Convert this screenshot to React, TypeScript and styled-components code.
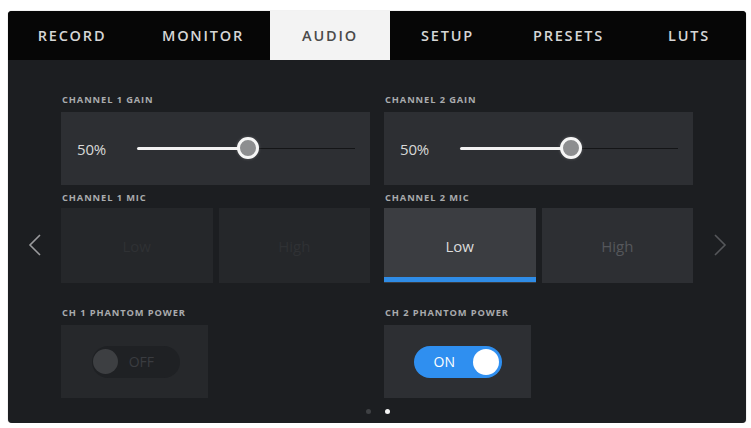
import React from "react";
import styled, { createGlobalStyle } from "styled-components";

const GlobalStyle = createGlobalStyle`
  html, body {
    margin: 0;
    padding: 0;
    background: #ffffff;
  }
  body {
    font-family: "Open Sans", "Liberation Sans", sans-serif;
  }
`;

const Screen = styled.div`
  width: 738px;
  height: 412px;
  margin: 11px 0 0 8px;
  background: #1c1e21;
  border-radius: 4px;
  overflow: hidden;
  display: flex;
  flex-direction: column;
  box-shadow: 0 0 1px rgba(0, 0, 0, 0.5);
`;

const TabBar = styled.div`
  height: 49px;
  background: #060606;
  display: grid;
  grid-template-columns: 128px 134px 120px 115px 127px 114px;
`;

const Tab = styled.div<{ $active?: boolean }>`
  display: flex;
  align-items: center;
  justify-content: center;
  font-size: 14.5px;
  font-weight: 600;
  letter-spacing: 1.8px;
  color: ${(p) => (p.$active ? "#4a4a4a" : "#d6d6d6")};
  background: ${(p) => (p.$active ? "#f3f3f3" : "transparent")};
`;

const Body = styled.div`
  flex: 1;
  display: flex;
`;

const Side = styled.div`
  width: 53px;
  display: flex;
  align-items: center;
  justify-content: center;
  padding-top: 7px;
`;

const Main = styled.div`
  flex: 1;
  display: flex;
  flex-direction: column;
  padding-top: 34px;
`;

const Columns = styled.div`
  display: grid;
  grid-template-columns: 309px 309px;
  column-gap: 14px;
`;

const Section = styled.div<{ $gap?: number }>`
  display: flex;
  flex-direction: column;
  margin-top: ${(p) => p.$gap ?? 0}px;
`;

const Label = styled.div<{ $space?: number }>`
  height: 12px;
  line-height: 12px;
  font-size: 9.3px;
  font-weight: 700;
  letter-spacing: 0.9px;
  color: #a9abad;
  margin-bottom: ${(p) => p.$space ?? 6}px;
  padding-left: 1px;
  white-space: nowrap;
`;

const Panel = styled.div<{ $dim?: boolean }>`
  height: 73px;
  background: ${(p) => (p.$dim ? "#26282b" : "#2d2f33")};
`;

const SliderPanel = styled(Panel)`
  display: flex;
  align-items: center;
  padding: 0 15px 0 16px;
`;

const Value = styled.div`
  width: 60px;
  font-size: 15px;
  color: #d8d8d8;
  letter-spacing: -0.2px;
`;

const Track = styled.div`
  position: relative;
  flex: 1;
  height: 1px;
  background: #141517;
`;

const Fill = styled.div`
  position: absolute;
  left: 0;
  top: -1px;
  height: 3px;
  background: #f2f2f2;
  border-radius: 2px;
`;

const Thumb = styled.div`
  position: absolute;
  top: -11px;
  width: 16px;
  height: 16px;
  margin-left: -9px;
  border-radius: 50%;
  background: #8d8e90;
  border: 3px solid #f6f6f6;
  box-shadow: 0 0 3px rgba(255, 255, 255, 0.25);
`;

const ButtonRow = styled.div`
  display: grid;
  grid-template-columns: 1fr 1fr;
  column-gap: 6px;
  height: 75px;
`;

const MicButton = styled.div<{ $state: "active" | "idle" | "disabled" }>`
  position: relative;
  display: flex;
  align-items: center;
  justify-content: center;
  font-size: 15px;
  background: ${(p) =>
    p.$state === "active" ? "#3b3d41" : p.$state === "idle" ? "#2d2f33" : "#25272a"};
  color: ${(p) =>
    p.$state === "active" ? "#dcdcdc" : p.$state === "idle" ? "#55575b" : "#2f3134"};
`;

const ActiveBar = styled.div`
  position: absolute;
  left: 0;
  right: 0;
  bottom: 1px;
  height: 5px;
  background: #2f8ce6;
`;

const PowerPanel = styled(Panel)`
  width: 147px;
  display: flex;
  align-items: center;
  justify-content: center;
`;

const Toggle = styled.div<{ $on?: boolean }>`
  width: 88px;
  height: 32px;
  border-radius: 16px;
  box-sizing: border-box;
  display: flex;
  align-items: center;
  flex-direction: ${(p) => (p.$on ? "row" : "row-reverse")};
  justify-content: space-between;
  padding: ${(p) => (p.$on ? "0 3px 0 20px" : "0 26px 0 1px")};
  background: ${(p) => (p.$on ? "#2f8ff0" : "#1f2124")};
  font-size: 14px;
  font-weight: 500;
  color: ${(p) => (p.$on ? "#ffffff" : "#3a3c40")};
  margin-left: ${(p) => (p.$on ? 0 : 3)}px;
`;

const Knob = styled.div<{ $on?: boolean }>`
  width: ${(p) => (p.$on ? 26 : 25)}px;
  height: ${(p) => (p.$on ? 26 : 25)}px;
  border-radius: 50%;
  background: ${(p) => (p.$on ? "#ffffff" : "#3d3f42")};
`;

const Dots = styled.div`
  display: flex;
  justify-content: center;
  gap: 14px;
  margin-top: 11px;
  padding-left: 1px;
`;

const Dot = styled.div<{ $on?: boolean }>`
  width: 5px;
  height: 5px;
  border-radius: 50%;
  background: ${(p) => (p.$on ? "#f4f4f4" : "#3f4144")};
`;

const Chevron = ({ dir, color }: { dir: "left" | "right"; color: string }) => (
  <svg width="14" height="24" viewBox="0 0 14 24">
    <polyline
      points={dir === "left" ? "12,2 2,12 12,22" : "2,2 12,12 2,22"}
      fill="none"
      stroke={color}
      strokeWidth="1.6"
    />
  </svg>
);

const tabs = ["RECORD", "MONITOR", "AUDIO", "SETUP", "PRESETS", "LUTS"];

const GainSlider = ({ value }: { value: number }) => (
  <SliderPanel>
    <Value>{value}%</Value>
    <Track>
      <Fill style={{ width: `${value}%` }} />
      <Thumb style={{ left: `${value}%` }} />
    </Track>
  </SliderPanel>
);

const App: React.FC = () => {
  return (
    <>
      <GlobalStyle />
      <Screen>
        <TabBar>
          {tabs.map((t) => (
            <Tab key={t} $active={t === "AUDIO"}>
              {t}
            </Tab>
          ))}
        </TabBar>
        <Body>
          <Side>
            <Chevron dir="left" color="#9a9b9d" />
          </Side>
          <Main>
            <Columns>
              <Section>
                <Label>CHANNEL 1 GAIN</Label>
                <GainSlider value={50} />
              </Section>
              <Section>
                <Label>CHANNEL 2 GAIN</Label>
                <GainSlider value={50} />
              </Section>
              <Section $gap={7}>
                <Label $space={4}>CHANNEL 1 MIC</Label>
                <ButtonRow>
                  <MicButton $state="disabled">Low</MicButton>
                  <MicButton $state="disabled">High</MicButton>
                </ButtonRow>
              </Section>
              <Section $gap={7}>
                <Label $space={4}>CHANNEL 2 MIC</Label>
                <ButtonRow>
                  <MicButton $state="active">
                    Low
                    <ActiveBar />
                  </MicButton>
                  <MicButton $state="idle">High</MicButton>
                </ButtonRow>
              </Section>
              <Section $gap={24}>
                <Label>CH 1 PHANTOM POWER</Label>
                <PowerPanel $dim>
                  <Toggle>
                    OFF
                    <Knob />
                  </Toggle>
                </PowerPanel>
              </Section>
              <Section $gap={24}>
                <Label>CH 2 PHANTOM POWER</Label>
                <PowerPanel>
                  <Toggle $on>
                    ON
                    <Knob $on />
                  </Toggle>
                </PowerPanel>
              </Section>
            </Columns>
            <Dots>
              <Dot />
              <Dot $on />
            </Dots>
          </Main>
          <Side>
            <Chevron dir="right" color="#55575a" />
          </Side>
        </Body>
      </Screen>
    </>
  );
};

export default App;
